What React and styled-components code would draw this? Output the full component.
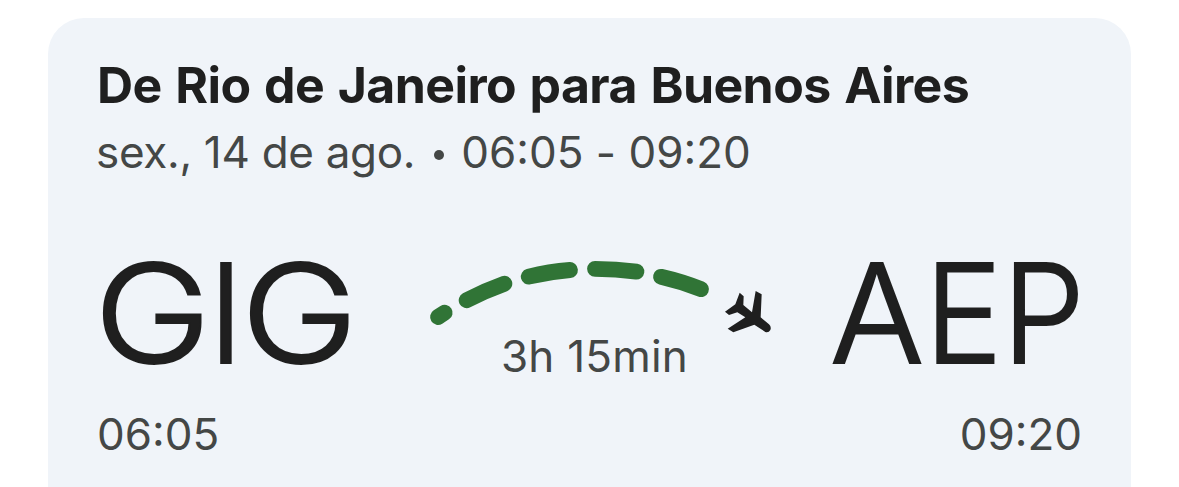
import React from 'react';
import styled, { createGlobalStyle } from 'styled-components';

const flight = {
  title: 'De Rio de Janeiro para Buenos Aires',
  date: 'sex., 14 de ago.',
  duration: '3h 15min',
  from: { code: 'GIG', time: '06:05' },
  to: { code: 'AEP', time: '09:20' },
};

// Cell width and horizontal stretch of each large letter
const letters = {
  G: { width: 111, stretch: 1.15 },
  I: { width: 36, stretch: 1 },
  A: { width: 90, stretch: 1.02 },
  E: { width: 83, stretch: 0.95 },
  P: { width: 77, stretch: 0.96 },
};

// Segments of the route arc
const dashes = [
  'M18 75 L24.7 70.7',
  'M46.6 58.3 Q65 48.6 84.4 41.7',
  'M108.7 34.7 Q129 29.6 150 28',
  'M175 26.8 Q196 26.8 216.4 29.6',
  'M241 34.8 Q262 39.6 281 47.2',
];

const AirportCode = ({ code }) => (
  <Code>
    {code.split('').map((letter, i) => (
      <Letter key={i} $width={letters[letter].width} $stretch={letters[letter].stretch}>
        {letter}
      </Letter>
    ))}
  </Code>
);

const FlightArc = () => (
  <Arc viewBox="0 0 370 100">
    {dashes.map(d => (
      <path key={d} d={d} fill="none" stroke="#307436" strokeWidth="15.8" strokeLinecap="round" />
    ))}
    <path
      transform="translate(160 8) scale(0.33333)"
      fill="#1f1f1f"
      d="M479 128 L491 139 L490 165 L516 187 L527 123 L545 133 L542 202 L567 223 Q575 231 571 240 Q566 249 556 246 L523 224 L460 247 L443 236 L496 202 L472 187 L447 195 L435 185 L466 163 Z"
    />
  </Arc>
);

const App = () => (
  <>
    <GlobalStyle />
    <Card>
      <Title>{flight.title}</Title>
      <Subtitle>
        <DateText>{flight.date}</DateText>
        <Dot />
        <span>{flight.from.time} <Hyphen>-</Hyphen> {flight.to.time}</span>
      </Subtitle>
      <Route>
        <AirportCode code={flight.from.code} />
        <Leg>
          <FlightArc />
          <Duration>{flight.duration}</Duration>
        </Leg>
        <AirportCode code={flight.to.code} />
      </Route>
      <Times>
        <span>{flight.from.time}</span>
        <span>{flight.to.time}</span>
      </Times>
    </Card>
  </>
);

export default App;

// Styled Components
const GlobalStyle = createGlobalStyle`
  * {
    box-sizing: border-box;
  }

  body {
    margin: 0;
    background: #ffffff;
    font-family: Inter, 'Liberation Sans', sans-serif;
    overflow: hidden;
  }
`;

const Card = styled.main`
  width: 1083px;
  height: 469px;
  margin: 18px 0 0 48px;
  padding: 37px 49px 0;
  border-radius: 36px 36px 0 0;
  background: #f0f4f9;
  color: #444746;
`;

const Title = styled.h1`
  margin: 0;
  font-size: 50px;
  line-height: 60px;
  font-weight: 700;
  letter-spacing: -0.6px;
  word-spacing: 2.3px;
  white-space: nowrap;
  color: #1f1f1f;
`;

const Subtitle = styled.div`
  display: flex;
  align-items: center;
  margin: 7px 0 0 -1px;
  font-size: 44px;
  line-height: 60px;
  white-space: nowrap;
`;

const DateText = styled.span`
  letter-spacing: -0.3px;
`;

const Hyphen = styled.span`
  position: relative;
  top: 1px;
  font-feature-settings: 'calt' 0;
`;

const Dot = styled.i`
  width: 10px;
  height: 10px;
  margin: 5px 17px 0 19px;
  border-radius: 50%;
  background: #444746;
`;

const Route = styled.div`
  display: flex;
  justify-content: space-between;
  height: 140px;
  margin-top: 61px;
`;

/* The outline brings the light weight up to an even 12px stem */
const Code = styled.div`
  display: flex;
  flex: none;
  font-size: 137px;
  line-height: 140px;
  font-weight: 300;
  -webkit-text-stroke: 2px #1f1f1f;
  color: #1f1f1f;
`;

const Letter = styled.span`
  display: flex;
  justify-content: center;
  width: ${({ $width }) => $width}px;
  transform: scaleX(${({ $stretch }) => $stretch});
`;

const Leg = styled.div`
  display: flex;
  flex-direction: column;
  align-items: center;
  width: 370px;
  margin-right: -23px;
`;

const Arc = styled.svg`
  flex: none;
  width: 370px;
  height: 100px;
  margin-top: -1px;
`;

const Duration = styled.div`
  margin: -16px 21px 0 0;
  font-size: 44px;
  line-height: 60px;
  letter-spacing: 0.2px;
  white-space: nowrap;
`;

const Times = styled.div`
  display: flex;
  justify-content: space-between;
  margin-top: 21px;
  font-size: 44px;
  line-height: 60px;
`;
